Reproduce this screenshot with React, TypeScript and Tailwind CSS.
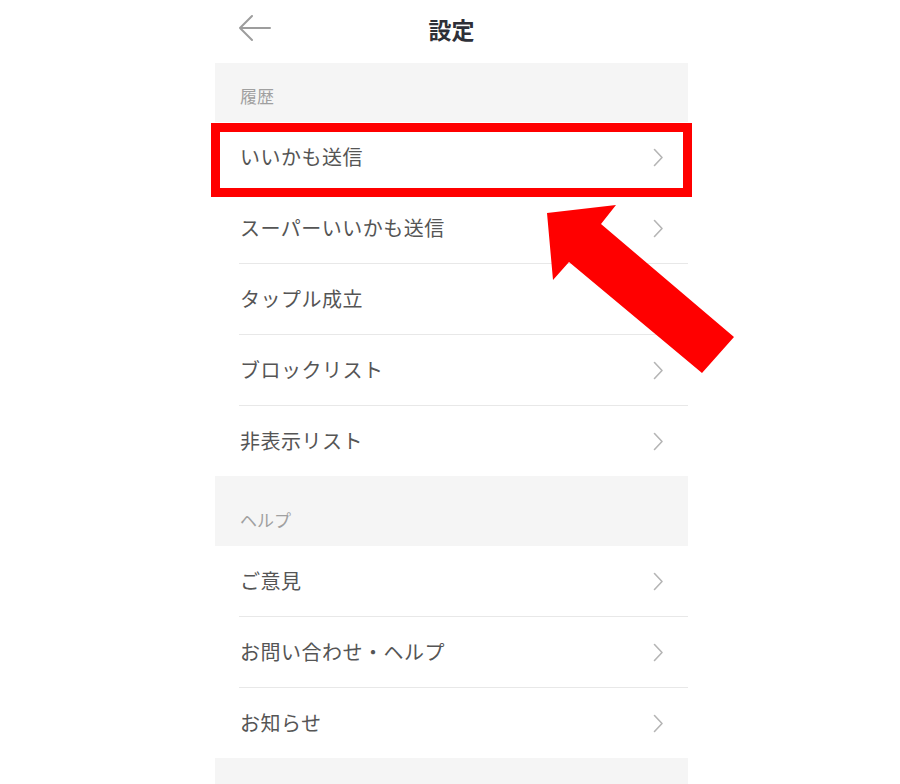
import React from "react";

const font = { fontFamily: '"Noto Sans CJK JP", "Noto Sans", sans-serif' };

function Chevron() {
  return (
    <svg width="11" height="19" viewBox="0 0 11 19" className="shrink-0">
      <path d="M1.5 1.5 L9 9.5 L1.5 17.5" fill="none" stroke="#b5b5b5" strokeWidth="1.6" strokeLinecap="round" strokeLinejoin="round" />
    </svg>
  );
}

function Row({ label, last, chevron = true }: { label: string; last?: boolean; chevron?: boolean }) {
  return (
    <div className="pl-[24px] bg-white">
      <div className={`flex items-center justify-between pr-[24px] ${last ? "h-[70px]" : "h-[71px] border-b border-[#e8e8e8]"}`}>
        <span className="text-[20px] leading-none text-[#555555] pl-px tracking-[0.5px]">{label}</span>
        {chevron && <Chevron />}
      </div>
    </div>
  );
}

function SectionHeader({ label, height, padTop }: { label: string; height: string; padTop: string }) {
  return (
    <div className={`bg-[#f5f5f5] ${height} ${padTop} pl-[25px]`}>
      <span className="text-[17px] leading-none text-[#a0a0a0]">{label}</span>
    </div>
  );
}

export default function App() {
  return (
    <div className="relative w-[900px] h-[784px] overflow-hidden bg-white" style={font}>
      <div className="ml-[215px] w-[473px]">
        <div className="h-[63px] flex items-center relative">
          <div className="absolute left-[23px] top-[14px]">
            <svg width="34" height="28" viewBox="0 0 34 28">
              <path d="M2 14 H32 M14 2 L2 14 L14 26" fill="none" stroke="#9d9d9d" strokeWidth="2" strokeLinecap="round" strokeLinejoin="round" />
            </svg>
          </div>
          <div className="w-full text-center text-[23px] font-bold text-[#2e3038] leading-none -mt-[5px]">設定</div>
        </div>
        <SectionHeader label="履歴" height="h-[59px]" padTop="pt-[21px]" />
        <Row label="いいかも送信" />
        <Row label="スーパーいいかも送信" />
        <Row label="タップル成立" chevron={false} />
        <Row label="ブロックリスト" />
        <Row label="非表示リスト" last />
        <SectionHeader label="ヘルプ" height="h-[70px]" padTop="pt-[32px]" />
        <Row label="ご意見" />
        <Row label="お問い合わせ・ヘルプ" />
        <Row label="お知らせ" last />
        <div className="bg-[#f5f5f5] h-[40px]" />
      </div>

      <div className="absolute left-[211px] top-[123px] w-[481px] h-[74px] border-[9px] border-[#ff0000]" />

      <svg className="absolute left-0 top-0 pointer-events-none" width="900" height="784" viewBox="0 0 900 784">
        <polygon
          points="547,213 616,205 601,224 734,337 702,373 569,262 553,280"
          fill="#ff0000"
        />
      </svg>
    </div>
  );
}
